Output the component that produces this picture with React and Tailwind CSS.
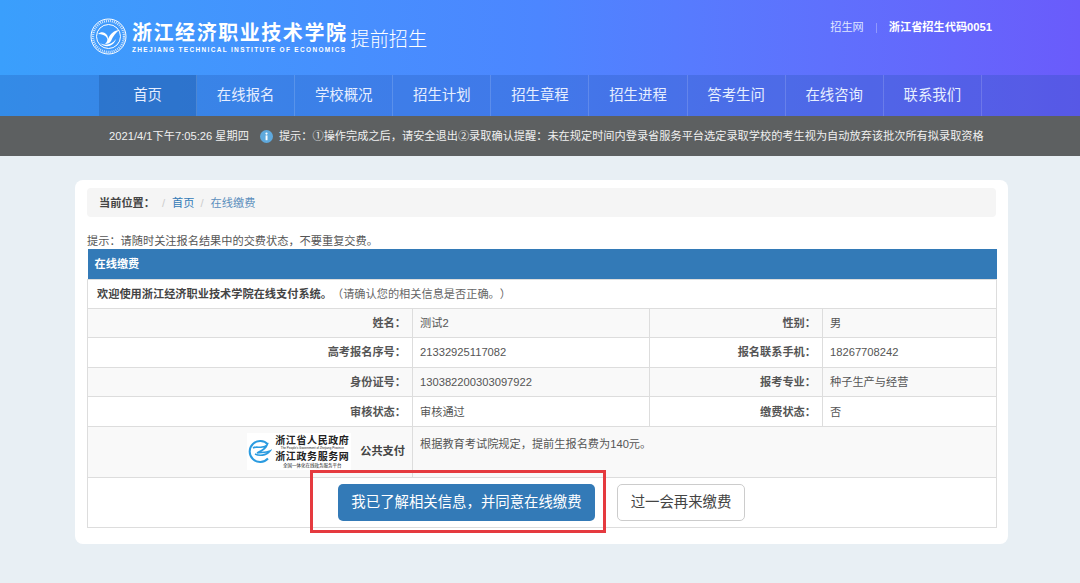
const navItems = ["首页", "在线报名", "学校概况", "招生计划", "招生章程", "招生进程", "答考生问", "在线咨询", "联系我们"];

const infoRows = [
  ["姓名：", "测试2", "性别：", "男"],
  ["高考报名序号：", "21332925117082", "报名联系手机：", "18267708242"],
  ["身份证号：", "130382200303097922", "报考专业：", "种子生产与经营"],
  ["审核状态：", "审核通过", "缴费状态：", "否"],
];

const SchoolEmblem = () => (
  <svg width="37" height="37" viewBox="0 0 37 37" fill="none" className="shrink-0">
    <circle cx="18.5" cy="18.5" r="17.5" stroke="white" strokeWidth="1" />
    <circle cx="18.5" cy="18.5" r="15.5" stroke="white" strokeWidth="2.4" strokeDasharray="1 1" opacity="0.75" />
    <circle cx="18.5" cy="18.5" r="12" stroke="white" strokeWidth="1" />
    <path d="M8 16c3-3 7-2 9 1 1 2 1 3 1 4 2-5 6-9 12-9-4 2-7 6-9 11-1 2-3 3-6 3 2-2 3-4 2-6-2-3-5-4-9-4z" fill="white" />
    <path d="M10 25c5 3 12 2 16-4-2 7-10 10-16 4z" fill="white" />
  </svg>
);

const InfoIcon = () => (
  <svg width="13" height="13" viewBox="0 0 13 13" className="shrink-0">
    <circle cx="6.5" cy="6.5" r="6.5" fill="#5fa9dd" />
    <rect x="5.6" y="5.4" width="1.9" height="4.8" fill="#ffffff" />
    <circle cx="6.5" cy="3.6" r="1.1" fill="#ffffff" />
  </svg>
);

const GovLogo = () => (
  <div className="flex items-center w-[104px] h-[37px] bg-white pl-[1px]">
    <svg width="24" height="25" viewBox="0 0 24 25" fill="none" className="shrink-0">
      <path d="M20 5.5A10.5 10.5 0 1 0 20 19.5" stroke="#2b9be0" strokeWidth="2" />
      <path d="M5 9c3-2 6 0 9-1 2 0 4-1 5-2-1 4-6 6-10 8 4-1 8 0 13-2-4 5-11 5-15 3" stroke="#2b9be0" strokeWidth="1.6" />
    </svg>
    <div className="ml-[3px] flex flex-col items-center text-[#222222] font-bold leading-none">
      <span className="text-[10px] leading-[11px] tracking-[0.6px]">浙江省人民政府</span>
      <span className="text-[3px] leading-[5px] font-normal whitespace-nowrap">The People's Government of Zhejiang Province</span>
      <span className="text-[10px] leading-[12px] tracking-[0.6px]">浙江政务服务网</span>
      <span className="text-[4.5px] leading-[6px] font-normal whitespace-nowrap">全国一体化在线政务服务平台</span>
    </div>
  </div>
);

const App = () => {
  return (
    <div className="h-[583px] overflow-hidden bg-[#e8eff4] text-[11.2px] text-[#555555] [text-spacing-trim:space-all] font-['Liberation_Sans','Noto_Sans_CJK_SC',sans-serif]">
      <div className="bg-gradient-to-r from-[#3a9ffc] via-[#4c86ff] to-[#6a5bfb]">
        {/* Top banner */}
        <div className="h-[75px] flex items-start pl-[90px] pr-[88px] text-white">
          <div className="flex items-center mt-[18px]">
            <SchoolEmblem />
            <div className="ml-[5px] flex flex-col">
              <span className="text-[20px] leading-[26px] font-bold tracking-[1.55px] whitespace-nowrap">浙江经济职业技术学院</span>
              <span className="text-[6.5px] leading-[8px] font-bold tracking-[1.32px] whitespace-nowrap">ZHEJIANG TECHNICAL INSTITUTE OF ECONOMICS</span>
            </div>
            <span className="ml-[3px] mt-[6px] text-[19.2px] leading-[26px] font-light">提前招生</span>
          </div>
          <div className="ml-auto flex items-center mt-[20px] leading-[15px]">
            <span className="text-[#dfe6ff]">招生网</span>
            <span className="mx-[12px] w-px h-[10px] bg-white/30" />
            <span className="font-bold">浙江省招生代码0051</span>
          </div>
        </div>

        {/* Main nav */}
        <nav className="h-[41px] bg-[#1e4fa8]/25 pl-[99px] flex">
          {navItems.map((item, i) => (
            <a
              key={item}
              className={`w-[98.1px] flex items-center justify-center text-[14.4px] text-[#e6eeff] border-r border-white/15 ${
                i === 0 ? "bg-[#1e5aa8]/40" : ""
              }`}
            >
              {item}
            </a>
          ))}
        </nav>
      </div>

      {/* Notice bar */}
      <div className="h-[40px] bg-[#5d6061] flex items-center pl-[109px] text-[#f0f0f0] whitespace-nowrap">
        <span>2021/4/1下午7:05:26 星期四</span>
        <span className="ml-[11px]">
          <InfoIcon />
        </span>
        <span className="ml-[6px]">提示：①操作完成之后，请安全退出②录取确认提醒：未在规定时间内登录省服务平台选定录取学校的考生视为自动放弃该批次所有拟录取资格</span>
      </div>

      <div className="mt-[24px] ml-[75px] w-[933px] h-[364px] bg-white rounded-[8px] px-[12px] pt-[8px]">
        {/* Breadcrumb */}
        <div className="h-[29px] bg-[#f5f5f5] rounded-[4px] flex items-center pl-[12px] pt-[1px]">
          <span className="font-bold text-[#444444]">当前位置：</span>
          <span className="ml-[7px] text-[#cccccc]">/</span>
          <a className="ml-[7px] text-[#337ab7]">首页</a>
          <span className="ml-[6px] text-[#cccccc]">/</span>
          <a className="ml-[7px] text-[#5c8fbd]">在线缴费</a>
        </div>

        <p className="mt-[17px] h-[15px] leading-[15px]">提示：请随时关注报名结果中的交费状态，不要重复交费。</p>

        <table className="w-[909px] table-fixed border-collapse">
          <colgroup>
            <col className="w-[325px]" />
            <col className="w-[237px]" />
            <col className="w-[173px]" />
            <col className="w-[174px]" />
          </colgroup>
          <tbody>
            <tr className="h-[30px]">
              <td colSpan={4} className="bg-[#337ab7] text-white font-bold pl-[7px] pt-[1px]">在线缴费</td>
            </tr>
            <tr className="h-[29px]">
              <td colSpan={4} className="border border-[#dddddd] pl-[9px] pt-[1px] text-[#444444]">
                <span className="font-bold">欢迎使用浙江经济职业技术学院在线支付系统。</span>
                <span className="text-[#666666]">（请确认您的相关信息是否正确。）</span>
              </td>
            </tr>
            {infoRows.map((row, i) => (
              <tr key={row[0]} className={`h-[29.6px] ${i % 2 === 0 ? "bg-[#f9f9f9]" : ""}`}>
                <td className="border border-[#dddddd] text-right pr-[6px] pt-[1px] font-bold text-[#555555]">{row[0]}</td>
                <td className="border border-[#dddddd] pl-[7px] pt-[1px]">{row[1]}</td>
                <td className="border border-[#dddddd] text-right pr-[6px] pt-[1px] font-bold text-[#555555]">{row[2]}</td>
                <td className="border border-[#dddddd] pl-[7px] pt-[1px]">{row[3]}</td>
              </tr>
            ))}
            <tr className="h-[51px] bg-[#f9f9f9]">
              <td className="border border-[#dddddd] pr-[7px]">
                <div className="flex items-center justify-end">
                  <GovLogo />
                  <span className="ml-[9px] font-bold text-[#444444]">公共支付</span>
                </div>
              </td>
              <td colSpan={3} className="border border-[#dddddd] pl-[7px] align-top pt-[9px]">根据教育考试院规定，提前生报名费为140元。</td>
            </tr>
            <tr className="h-[50px]">
              <td colSpan={4} className="border border-[#dddddd] relative">
                <div className="flex items-center pl-[250px]">
                  <button className="w-[257px] h-[37px] bg-[#337ab7] text-white text-[14.4px] rounded-[5px]">我已了解相关信息，并同意在线缴费</button>
                  <button className="ml-[22px] w-[128px] h-[37px] bg-white border border-[#cccccc] text-[#444444] text-[14.4px] rounded-[5px]">过一会再来缴费</button>
                </div>
                {/* red annotation box */}
                <div className="absolute left-[222px] top-[-8px] w-[296px] h-[63px] border-[3px] border-[#e53a3f]" />
              </td>
            </tr>
          </tbody>
        </table>
      </div>
    </div>
  );
};

export default App;
